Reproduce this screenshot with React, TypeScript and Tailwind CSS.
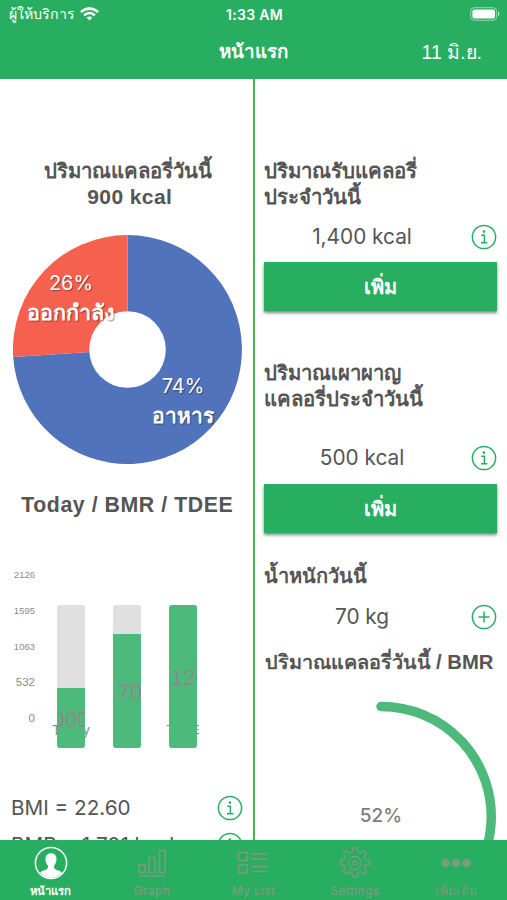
import React from "react";

const slices = [
    { path: "M114.5 114.5V0A114.5 114.5 0 1 1 .2 122Z", color: "#5073bb" },
    { path: "M114.5 114.5L.2 122A114.5 114.5 0 0 1 114.5 0Z", color: "#f6604e" },
];

const bars = [
    { name: "Today", value: "900", fill: 60, nameSize: "text-[14px]", textPos: "top-[20px] left-[14px]" },
    { name: "BMR", value: "1701", fill: 114, nameSize: "text-[12px]", textPos: "top-[46px] left-[17px]" },
    { name: "TDEE", value: "2126", fill: 143, nameSize: "text-[12.5px]", textPos: "top-[61px] left-[14px]" },
];

const InfoIcon = () => (
    <svg className="h-[26px] w-[26px] shrink-0" viewBox="0 0 26 26" fill="none" stroke="#27ae60" strokeWidth="1.5">
        <circle cx="13" cy="13" r="11.6" />
        <path d="M10.2 11.2h3.2v7.4M10 18.7h6.4" />
        <circle cx="12.9" cy="7.6" r="1.3" fill="#27ae60" stroke="none" />
    </svg>
);

const PlusIcon = () => (
    <svg className="h-[26px] w-[26px] shrink-0" viewBox="0 0 26 26" fill="none" stroke="#27ae60" strokeWidth="1.5">
        <circle cx="13" cy="13" r="11.6" />
        <path d="M13 7.4v11.2M7.4 13h11.2" />
    </svg>
);

const AddButton = () => (
    <button className="flex h-[49px] w-[233.5px] items-center justify-center bg-[#27ae60] text-[20px] font-semibold text-white shadow-[0_2px_3px_rgba(0,0,0,0.5)]">
        เพิ่ม
    </button>
);

const Header = () => (
    <header className="h-[79px] shrink-0 bg-[#27ae60] text-white">
        <div className="grid h-[28px] grid-cols-3 items-center pr-[7px] pl-[9px]">
            <div className="flex items-center gap-[5px] text-[14.2px] whitespace-nowrap">
                <span className="leading-[20px]">ผู้ให้บริการ</span>
                <svg className="h-[14px] w-[19px]" viewBox="0 0 19 14" fill="none" stroke="white" strokeWidth="2.6">
                    <path d="M1 5.2C5.8.4 13.2.4 18 5.2M4.1 8.3c3-3 7.8-3 10.8 0" />
                    <path d="M6.6 10.6c1.7-1.6 4.1-1.6 5.8 0l-2.9 3Z" fill="white" stroke="none" />
                </svg>
            </div>
            <div className="text-center font-[Inter] text-[14px] font-semibold tracking-[0.3px]">1:33 AM</div>
            <div className="flex justify-end">
                <svg className="h-[14px] w-[30px]" viewBox="0 0 30 14">
                    <rect x=".7" y=".7" width="26" height="12.6" rx="3.6" fill="none" stroke="white" strokeOpacity=".5" />
                    <rect x="2.4" y="2.4" width="22.6" height="9.2" rx="2" fill="white" />
                    <path d="M28 4.6c2 .8 2 4 0 4.8Z" fill="white" fillOpacity=".6" />
                </svg>
            </div>
        </div>
        <div className="grid h-[49px] grid-cols-3 items-center pr-[25px] pl-[25px]">
            <h1 className="col-start-2 text-center text-[18.8px] font-bold">หน้าแรก</h1>
            <div className="text-right text-[19.5px]">11 มิ.ย.</div>
        </div>
    </header>
);

const BarChart = () => (
    <div className="flex h-[190px] w-full text-[#8b8b8b]">
        <div className="flex w-[35px] flex-col items-end gap-[17.8px] text-[9.5px] leading-[18px]">
            <span>2126</span>
            <span>1595</span>
            <span>1063</span>
            <span className="text-[11.5px]">532</span>
            <span className="text-[11.5px]">0</span>
        </div>
        <div className="flex gap-[28px] pt-[39px] pl-[22px]">
            {bars.map((bar) => (
                <div key={bar.name} className="relative h-[143px] w-[28px]">
                    <span
                        className={`absolute top-[116px] left-1/2 -translate-x-1/2 leading-[18px] ${bar.nameSize}`}
                    >
                        {bar.name}
                    </span>
                    <div className="relative flex h-full flex-col justify-end overflow-hidden rounded-[3px] bg-[#e0e0e0]">
                        <div className="relative shrink-0 overflow-hidden bg-[#4dba7b]" style={{ height: bar.fill }}>
                            <span className={`absolute -translate-x-1/2 text-[22px] leading-[24px] ${bar.textPos}`}>
                                {bar.value}
                            </span>
                        </div>
                    </div>
                </div>
            ))}
        </div>
    </div>
);

const Summary = () => (
    <section className="h-full w-[252.5px] shrink-0 overflow-hidden pt-[79px]">
        <h2 className="pl-[3px] text-center text-[20.3px] leading-[26px] font-bold whitespace-nowrap">
            ปริมาณแคลอรี่วันนี้
            <br />
            <span className="pl-[4px] text-[21px] tracking-[0.4px]">900 kcal</span>
        </h2>
        <div className="relative mt-[25px] ml-[13px] h-[229px] w-[229px]">
            <svg className="h-full w-full" viewBox="0 0 229 229">
                {slices.map((slice) => (
                    <path key={slice.color} d={slice.path} fill={slice.color} />
                ))}
                <circle cx="114.5" cy="114.5" r="38.3" fill="white" />
            </svg>
            <div className="absolute top-[33px] left-[58px] -translate-x-1/2 text-center text-[20px] leading-[30px] whitespace-nowrap text-white [text-shadow:1px_1px_1px_rgba(0,0,0,0.4)]">
                <div className="font-[Inter]">26%</div>
                <div className="text-[21.6px] font-semibold">ออกกำลัง</div>
            </div>
            <div className="absolute top-[136px] left-[170px] -translate-x-1/2 text-center text-[20px] leading-[30px] whitespace-nowrap text-white [text-shadow:1px_1px_1px_rgba(0,0,0,0.4)]">
                <div className="font-[Inter]">74%</div>
                <div className="text-[21px] font-semibold">อาหาร</div>
            </div>
        </div>
        <h2 className="mt-[28px] pl-[2px] text-center text-[21.3px] leading-[26px] font-bold tracking-[0.55px] whitespace-nowrap">
            Today / BMR / TDEE
        </h2>
        <div className="mt-[48px]">
            <BarChart />
        </div>
        <div className="mt-[39px] flex flex-col gap-[11px] pr-[9.5px] pl-[11px] font-[Inter] text-[20.7px] leading-[24px]">
            <div className="flex h-[26px] items-center justify-between">
                BMI = 22.60
                <InfoIcon />
            </div>
            <div className="flex h-[26px] items-center justify-between">
                BMR = 1,701 kcal
                <InfoIcon />
            </div>
        </div>
    </section>
);

const Today = () => (
    <section className="h-full flex-1 overflow-hidden pt-[79px] pl-[8.5px]">
        <h2 className="text-[20.4px] leading-[26px] font-bold whitespace-nowrap">
            ปริมาณรับแคลอรี่
            <br />
            ประจำวันนี้
        </h2>
        <div className="mt-[14px] mb-[12px] flex h-[26px] w-[233px] items-center">
            <span className="w-[207px] pr-[10px] text-center font-[Inter] text-[20.8px]">1,400 kcal</span>
            <InfoIcon />
        </div>
        <AddButton />
        <h2 className="mt-[49px] text-[20.3px] leading-[26px] font-bold whitespace-nowrap">
            ปริมาณเผาผาญ
            <br />
            แคลอรี่ประจำวันนี้
        </h2>
        <div className="mt-[33px] mb-[13px] flex h-[26px] w-[233px] items-center">
            <span className="w-[207px] pr-[10px] text-center font-[Inter] text-[20.8px]">500 kcal</span>
            <InfoIcon />
        </div>
        <AddButton />
        <h2 className="mt-[30px] text-[20px] leading-[26px] font-bold whitespace-nowrap">น้ำหนักวันนี้</h2>
        <div className="mt-[15px] mb-[19px] flex h-[26px] w-[233px] items-center">
            <span className="w-[207px] pr-[10px] text-center font-[Inter] text-[20.8px]">70 kg</span>
            <PlusIcon />
        </div>
        <h2 className="pl-[1px] text-[19.8px] leading-[26px] font-bold whitespace-nowrap">
            ปริมาณแคลอรี่วันนี้ <span className="text-[20.3px]">/ BMR</span>
        </h2>
        <div className="relative mt-[25px] h-[240px] w-[240px]">
            <svg className="h-full w-full" viewBox="0 0 240 240" fill="none">
                <path
                    d="M117 6.5A110 110 0 1 1 103.2 225.6"
                    stroke="#4dba7b"
                    strokeWidth="9.5"
                    strokeLinecap="round"
                />
            </svg>
            <span className="absolute top-[104px] left-[117.5px] -translate-x-1/2 font-[Inter] text-[19px] leading-[24px] font-medium text-[#7d7d7d]">
                52%
            </span>
        </div>
    </section>
);

const tabs = [
    {
        label: "หน้าแรก",
        icon: (
            <svg className="h-[34px] w-[34px]" viewBox="0 0 34 34" fill="white">
                <circle cx="17" cy="17" r="15.6" fill="none" stroke="white" strokeWidth="1.5" />
                <path d="M17 7.3c-3.6 0-5.7 2.4-5.5 6 .1 3 1.2 5 2.4 6.4.3 1.8-.1 3-1.6 3.8-2.4 1-4.8 1.3-6.2 3.3A15 15 0 0 0 17 32a15 15 0 0 0 10.9-5.2c-1.4-2-3.8-2.3-6.2-3.3-1.5-.8-1.9-2-1.6-3.8 1.2-1.4 2.3-3.4 2.4-6.4.2-3.6-1.9-6-5.5-6Z" />
            </svg>
        ),
    },
    {
        label: "Graph",
        icon: (
            <svg className="h-[34px] w-[34px]" viewBox="0 0 34 34" fill="none" stroke="currentColor" strokeWidth="1.5">
                <path d="M4 18.5h6v8H4ZM14 11.5h6v15h-6ZM24.5 4.5H30v22h-5.5ZM4 30h26" />
            </svg>
        ),
    },
    {
        label: "My List",
        icon: (
            <svg className="h-[34px] w-[34px]" viewBox="0 0 34 34" fill="none" stroke="currentColor" strokeWidth="1.5">
                <path d="M2.5 6.5h9v8h-9ZM2.5 19h9v8h-9ZM15.5 8h16M15.5 13h16M15.5 20.5h16M15.5 25.5h16" />
            </svg>
        ),
    },
    {
        label: "Settings",
        icon: (
            <svg className="h-[34px] w-[34px]" viewBox="0 0 34 34" fill="none" stroke="currentColor" strokeWidth="1.3">
                <path
                    d="M14.9 2h4.2l.7 4 2.6 1.1 3.3-2.4 3 3-2.4 3.3 1.1 2.6 4 .7v4.2l-4 .7-1.1 2.6 2.4 3.3-3 3-3.3-2.4-2.6 1.1-.7 4h-4.2l-.7-4-2.6-1.1-3.3 2.4-3-3 2.4-3.3-1.1-2.6-4-.7v-4.2l4-.7 1.1-2.6-2.4-3.3 3-3 3.3 2.4 2.6-1.1Z"
                    strokeLinejoin="round"
                />
                <circle cx="17" cy="17" r="6.5" />
                <circle cx="17" cy="17" r="2.2" />
            </svg>
        ),
    },
    {
        label: "เพิ่มเติม",
        icon: (
            <svg className="h-[34px] w-[34px]" viewBox="0 0 34 34" fill="currentColor">
                <circle cx="6.5" cy="17" r="4.2" />
                <circle cx="17" cy="17" r="4.2" />
                <circle cx="27.5" cy="17" r="4.2" />
            </svg>
        ),
    },
];

const App = () => {
    return (
        <div className="flex h-[900px] w-[507px] flex-col overflow-hidden bg-white font-['Liberation_Sans',sans-serif] text-[#555]">
            <Header />
            <main className="flex min-h-0 flex-1">
                <Summary />
                <div className="w-[2.5px] shrink-0 bg-[#4caf50]" />
                <Today />
            </main>
            <nav className="grid h-[60px] shrink-0 grid-cols-5 bg-[#27ae60]">
                {tabs.map((tab, i) => (
                    <div
                        key={tab.label}
                        className={`flex flex-col items-center pt-[6px] ${i === 0 ? "text-[11.3px] font-bold text-white" : "font-[Inter,'Liberation_Sans',sans-serif] text-[12px] font-medium tracking-[0.3px] text-[#7c9b80]"}`}
                    >
                        {tab.icon}
                        <span className="mt-[3px] leading-[16px]">{tab.label}</span>
                    </div>
                ))}
            </nav>
        </div>
    );
};

export default App;
